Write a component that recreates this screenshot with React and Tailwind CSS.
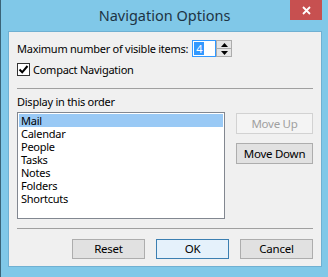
import React from 'react';

const items = ['Mail', 'Calendar', 'People', 'Tasks', 'Notes', 'Folders', 'Shortcuts'];

function DialogButton({ children, primary, disabled, wide }) {
    let look = 'border-[#adadad] bg-[#e1e1e1] text-[#000]';
    if (primary) look = 'border-[#3c7fb1] bg-[#e5f1fb] text-[#000]';
    if (disabled) look = 'border-[#d2d2d2] bg-[#f4f4f4] text-[#a0a0a0]';
    return (
        <button
            type="button"
            className={`${wide ? 'w-[77px] h-[21px]' : 'w-[73px] h-[20px]'} border flex items-center justify-center text-[11.5px] leading-none ${look}`}
        >
            {children}
        </button>
    );
}

export default function App() {
    return (
        <div
            className="w-[328px] h-[277px] bg-[#80c8e8] border-l border-[#3a6478] flex flex-col"
            style={{ fontFamily: '"Noto Sans", "Open Sans", sans-serif' }}
        >
            {/* Title bar */}
            <div className="h-[31px] relative flex items-center justify-center">
                <span className="text-[14.5px] text-[#1d3444] pt-[1px] whitespace-nowrap">Navigation Options</span>
                <div className="absolute top-0 right-[6px] w-[32px] h-[20px] bg-[#c75050] flex items-center justify-center">
                    <svg width="9" height="9" viewBox="0 0 9 9">
                        <path d="M1 1L8 8M8 1L1 8" stroke="#fff" strokeWidth="1.8" />
                    </svg>
                </div>
            </div>

            {/* Client area */}
            <div className="ml-[7px] mr-[6px] h-[236px] bg-[#f0f0f0] border border-[#6fb0d2] pl-[8px] pr-[8px] pt-[8px] text-[11px] leading-[15px] tracking-[-0.25px] text-black whitespace-nowrap">
                <div className="flex items-center h-[17px]">
                    <span>Maximum number of visible items:</span>
                    <div className="ml-[4px] flex h-[17px] tracking-normal">
                        <div className="w-[24px] h-[17px] border border-[#3399ff] bg-white flex items-center pl-[1px]">
                            <span className="bg-[#3399ff] text-white h-[13px] w-[10px] flex items-center justify-center leading-none">4</span>
                        </div>
                        <div className="w-[16px] h-[17px] border border-[#acacac] bg-[#e5e5e5] flex flex-col">
                            <div className="flex-1 flex items-center justify-center border-b border-[#acacac]">
                                <svg width="7" height="4" viewBox="0 0 7 4"><path d="M0 4L3.5 0L7 4Z" fill="#000" /></svg>
                            </div>
                            <div className="flex-1 flex items-center justify-center">
                                <svg width="7" height="4" viewBox="0 0 7 4"><path d="M0 0L3.5 4L7 0Z" fill="#000" /></svg>
                            </div>
                        </div>
                    </div>
                </div>

                <div className="flex items-center mt-[6px] h-[13px]">
                    <div className="w-[13px] h-[13px] border border-[#333] bg-white flex items-center justify-center">
                        <svg width="11" height="11" viewBox="0 0 11 11">
                            <path d="M1.5 5.5L4.2 8.3L9.5 2" stroke="#000" strokeWidth="2" fill="none" />
                        </svg>
                    </div>
                    <span className="ml-[3px]">Compact Navigation</span>
                </div>

                <div className="mt-[12px] h-px bg-[#a0a0a0]" />

                <div className="mt-[5px] leading-[16px]">Display in this order</div>

                <div className="mt-[2px] flex">
                    <div className="w-[208px] h-[107px] border border-[#828790] bg-white p-px">
                        {items.map((item, i) => (
                            <div
                                key={item}
                                className={`h-[13px] leading-[13px] px-[2px] ${i === 0 ? 'bg-[#99c9f5]' : ''}`}
                            >
                                {item}
                            </div>
                        ))}
                    </div>
                    <div className="ml-[11px] pt-px flex flex-col gap-[9px]">
                        <DialogButton disabled wide>Move Up</DialogButton>
                        <DialogButton wide>Move Down</DialogButton>
                    </div>
                </div>

                <div className="mt-[9px] h-px bg-[#a0a0a0]" />

                <div className="mt-[10px] flex justify-end gap-[11px]">
                    <DialogButton>Reset</DialogButton>
                    <DialogButton primary>OK</DialogButton>
                    <DialogButton>Cancel</DialogButton>
                </div>
            </div>
        </div>
    );
}
